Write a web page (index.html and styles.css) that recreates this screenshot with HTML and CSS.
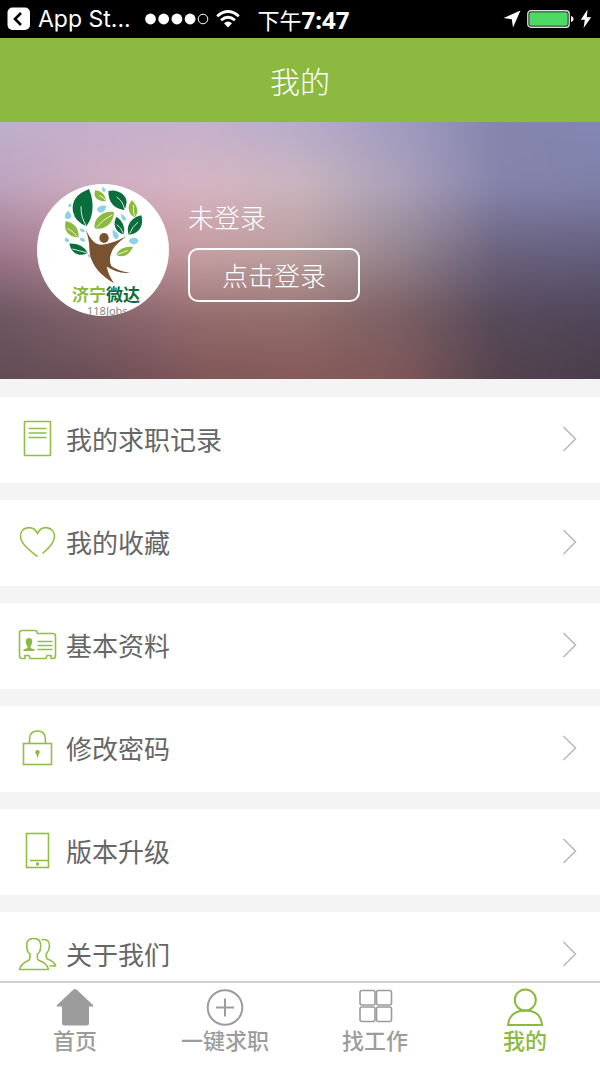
FILE: index.html
```html
<!DOCTYPE html>
<html lang="zh-CN">
<head>
<meta charset="utf-8">
<meta name="viewport" content="width=device-width, initial-scale=1">
<title>我的</title>
<link rel="stylesheet" href="styles.css">
</head>
<body>
<div class="app">
  <div class="status">
    <div class="status-left">
      <svg width="24" height="24" viewBox="0 0 24 24" aria-hidden="true"><rect x="0.5" y="0.5" width="22.5" height="22.5" rx="5" fill="#fff"/><path d="M14 6 8 12l6 6" fill="none" stroke="#000" stroke-width="2.6"/></svg>
      <span class="status-app">App St...</span>
      <svg class="signal" width="64" height="12" viewBox="0 0 64 12" aria-hidden="true"><g fill="#fff"><circle cx="5.5" cy="6" r="5.4"/><circle cx="18.7" cy="6" r="5.4"/><circle cx="31.9" cy="6" r="5.4"/><circle cx="45.1" cy="6" r="5.4"/></g><circle cx="58" cy="6" r="4.8" fill="none" stroke="#fff" stroke-width="1"/></svg>
      <svg class="wifi" width="24" height="18" viewBox="0 0 24 18" aria-hidden="true"><g fill="none" stroke="#fff" stroke-width="2.8"><path d="M1.2 6.2Q12-3.2 22.8 6.2"/><path d="M5 10.2Q12 4.2 19 10.2"/></g><path d="M8 13.2Q12 10 16 13.2L12 17.5z" fill="#fff"/></svg>
    </div>
    <span class="status-time">下午<b>7:47</b></span>
    <div class="status-right">
      <svg width="18" height="18" viewBox="0 0 18 18" aria-hidden="true"><path d="M17.5.5 10 17.5 8.8 9.2.5 8z" fill="#fff"/></svg>
      <svg width="47" height="18" viewBox="0 0 47 18" aria-hidden="true"><rect x=".8" y=".8" width="41.4" height="16.4" rx="3" fill="none" stroke="#ddd" stroke-width="1.4"/><rect x="2.3" y="2.3" width="38.4" height="13.4" rx="1.5" fill="#4cd964"/><path d="M44 6q2.6.6 2.6 3T44 12z" fill="#fff"/></svg>
      <svg width="12" height="20" viewBox="0 0 12 20" aria-hidden="true"><path d="M7.500.5.8 10.800h4L3.600 19 11.200 8.200H6.800z" fill="#fff"/></svg>
    </div>
  </div>

  <header class="title-bar"><h1>我的</h1></header>

  <section class="hero">
    <svg class="hero-bg" viewBox="-24 -24 648 305" preserveAspectRatio="none" aria-hidden="true">
      <defs>
        <linearGradient id="r1" gradientUnits="userSpaceOnUse" x1="0" x2="600" y1="0" y2="0"><stop offset="0" stop-color="#bfb0cc"/><stop offset=".17" stop-color="#c4b0cc"/><stop offset=".33" stop-color="#c4b2cb"/><stop offset=".5" stop-color="#b8accb"/><stop offset=".67" stop-color="#a09bc1"/><stop offset=".83" stop-color="#8685ae"/><stop offset="1" stop-color="#8387b2"/></linearGradient>
        <linearGradient id="r2" gradientUnits="userSpaceOnUse" x1="0" x2="600" y1="0" y2="0"><stop offset="0" stop-color="#bda3bd"/><stop offset=".17" stop-color="#d0aec2"/><stop offset=".33" stop-color="#d7b5c3"/><stop offset=".5" stop-color="#cab5be"/><stop offset=".67" stop-color="#aaa0b8"/><stop offset=".83" stop-color="#8583ab"/><stop offset="1" stop-color="#7e80a9"/></linearGradient>
        <linearGradient id="r3" gradientUnits="userSpaceOnUse" x1="0" x2="600" y1="0" y2="0"><stop offset="0" stop-color="#a0798d"/><stop offset=".17" stop-color="#bb8c9a"/><stop offset=".33" stop-color="#c69ca1"/><stop offset=".5" stop-color="#b99e9d"/><stop offset=".67" stop-color="#958590"/><stop offset=".83" stop-color="#6b6480"/><stop offset="1" stop-color="#666080"/></linearGradient>
        <linearGradient id="r4" gradientUnits="userSpaceOnUse" x1="0" x2="600" y1="0" y2="0"><stop offset="0" stop-color="#6d5661"/><stop offset=".17" stop-color="#84646d"/><stop offset=".33" stop-color="#976e6f"/><stop offset=".5" stop-color="#936f6c"/><stop offset=".67" stop-color="#7b6064"/><stop offset=".83" stop-color="#574a5b"/><stop offset="1" stop-color="#50475a"/></linearGradient>
        <linearGradient id="r5" gradientUnits="userSpaceOnUse" x1="0" x2="600" y1="0" y2="0"><stop offset="0" stop-color="#614c55"/><stop offset=".17" stop-color="#6b4e56"/><stop offset=".33" stop-color="#7f5557"/><stop offset=".5" stop-color="#865959"/><stop offset=".67" stop-color="#7d5658"/><stop offset=".83" stop-color="#54434e"/><stop offset="1" stop-color="#4a3c4a"/></linearGradient>
        <linearGradient id="fade" x2="0" y2="1"><stop offset="0" stop-color="#fff" stop-opacity="0"/><stop offset="1" stop-color="#fff"/></linearGradient>
        <mask id="m2" maskUnits="userSpaceOnUse" x="-24" y="-24" width="648" height="305"><rect x="-24" width="648" height="64" fill="url(#fade)"/><rect x="-24" y="64" width="648" height="217" fill="#fff"/></mask>
        <mask id="m3" maskUnits="userSpaceOnUse" x="-24" y="-24" width="648" height="305"><rect x="-24" y="64" width="648" height="64" fill="url(#fade)"/><rect x="-24" y="128" width="648" height="153" fill="#fff"/></mask>
        <mask id="m4" maskUnits="userSpaceOnUse" x="-24" y="-24" width="648" height="305"><rect x="-24" y="128" width="648" height="64" fill="url(#fade)"/><rect x="-24" y="192" width="648" height="89" fill="#fff"/></mask>
        <mask id="m5" maskUnits="userSpaceOnUse" x="-24" y="-24" width="648" height="305"><rect x="-24" y="192" width="648" height="65" fill="url(#fade)"/><rect x="-24" y="257" width="648" height="24" fill="#fff"/></mask>
      </defs>
      <rect x="-24" y="-24" width="648" height="305" fill="url(#r1)"/>
      <rect x="-24" y="-24" width="648" height="305" fill="url(#r2)" mask="url(#m2)"/>
      <rect x="-24" y="-24" width="648" height="305" fill="url(#r3)" mask="url(#m3)"/>
      <rect x="-24" y="-24" width="648" height="305" fill="url(#r4)" mask="url(#m4)"/>
      <rect x="-24" y="-24" width="648" height="305" fill="url(#r5)" mask="url(#m5)"/>
    </svg>
    <svg class="avatar" width="132" height="132" viewBox="0 0 132 132" role="img" aria-label="济宁微达 118Jobs">
      <g transform="translate(-7.3 -9.7) scale(.3333)">
        <g fill="#0a6e3c">
          <path d="M178 44C141 58 124 82 130 112Q137 143 170 155C190 132 196 86 178 44z"/>
          <path d="M236 50C262 43 290 60 291 83Q290 98 282 107C250 101 236 82 236 50z"/>
          <path d="M261 127C248 145 255 175 283 180Q288 145 261 127z"/>
          <path d="M335 123C307 128 287 153 297 181C325 180 344 157 335 123z"/>
          <path d="M119 208C125 237 149 249 174 236Q159 207 119 208z"/>
        </g>
        <g fill="#8cba3f">
          <path d="M197 47C188 68 204 82 229 81Q229 54 197 47z"/>
          <path d="M307 78C289 96 297 122 315 129Q335 108 307 78z"/>
          <path d="M253 113C217 109 190 134 195 162C226 168 251 148 253 113z"/>
          <path d="M108 140C100 168 117 190 147 189Q149 150 108 140z"/>
          <path d="M310 218C285 214 263 226 260 243Q293 255 310 218z"/>
        </g>
        <g fill="#8dd3e5">
          <path d="M230 94q-22-3-28 10 0 11 14 11 12-4 14-21z"/><path d="M115 109q-14 13-8 23 14 7 19-7-1-8-11-16z"/><path d="M123 86q-12 9-5 13 12-1 5-13z"/><path d="M217 38q-3 14 7 15 11-8-7-15z"/><path d="M275 118q-3 18 10 21 13-5-10-21z"/><path d="M297 202q2-12 18-12 14 3 10 13-11 15-28-1z"/><path d="M249 166q-2 23 9 28 10 0 9-11-4-10-18-17z"/><path d="M150 163q4 14 15 10 1-11-15-10z"/><path d="M107 189q-6 13 6 15 15-5-6-15z"/><path d="M150 191q3 15 16 10 1-12-16-10z"/><path d="M174 240q1 11 9 10 6-9-9-10z"/>
        </g>
        <g fill="none" stroke="#fff" stroke-width="2.5"><path d="M154 96Q153 129 169 153M261 68q19 14 23 35M209 64q13 4 19 15M312 92q-3 18 2 33M247 122q-28 14-46 36M261 151q14 8 20 27M325 144q-19 14-25 34M113 162q18 9 29 24M128 224q19 5 43 11M294 229q-14 5-31 12"/></g>
        <g fill="#795230"><ellipse cx="223" cy="191" rx="14" ry="15"/><path d="M168 166C184 197 196 211 215 211Q243 211 290 186Q249 216 244 238Q237 258 245 275Q265 291 301 295Q265 300 231 277Q236 303 253 327C207 300 180 267 179 222Q179 196 168 166z"/></g>
      </g>
      <text class="logo-name" x="35" y="117"><tspan fill="#8cba3f">济宁</tspan><tspan fill="#0a6e3c">微达</tspan></text>
      <text class="logo-sub" x="50" y="131">118Jobs</text>
    </svg>
    <div class="account">
      <p>未登录</p>
      <button class="login" type="button">点击登录</button>
    </div>
  </section>

  <main class="menu">
    <a class="row" href="#records"><svg class="icon" viewBox="0 0 40 40"><rect x="6.500" y="2.500" width="26" height="34" rx=".5"/><path d="M10.500 9.500h18M10.500 14h18M10.500 18.500h18"/></svg><span>我的求职记录</span><svg class="chevron" viewBox="0 0 16 28"><path d="m1.500 2 12 12-12 12"/></svg></a>
    <a class="row" href="#favorites"><svg class="icon" viewBox="0 0 40 40"><path d="M19.500 34.700C14 29.700 3 23 2.500 14.500C2 5 14.500 2 19.500 11.500C24 2 36.500 5 36.500 14.500C36.500 21 30 27 24.500 31.500"/></svg><span>我的收藏</span><svg class="chevron" viewBox="0 0 16 28"><path d="m1.500 2 12 12-12 12"/></svg></a>
    <a class="row" href="#profile"><svg class="icon" viewBox="0 0 40 40"><path d="M7 33.500H4q-2.500 0-2.500-2.500V8q0-2.500 2.500-2.500h13q2 0 2.500 3H35q2.500 0 2.500 2.500v20q0 2.500-2.500 2.500h-2v-3h-4l-1 3H12l-1-3H7z"/><path d="M19.500 16.500h15M19.500 20.500h15M19.500 24.500h15"/><path class="solid" d="M11 13q3.500 0 3.200 4-.4 3-1.600 4v2l4 1.500v1.500H5.500v-1.500l4-1.500v-2q-1.500-1-1.700-4-.3-4 3.200-4z"/></svg><span>基本资料</span><svg class="chevron" viewBox="0 0 16 28"><path d="m1.500 2 12 12-12 12"/></svg></a>
    <a class="row" href="#password"><svg class="icon" viewBox="0 0 40 40"><rect x="5.500" y="15.500" width="28" height="21"/><path d="M11.500 15.500v-4q0-8.500 8-8.500t8 8.500v4"/><path class="solid" d="M19.500 22c3 0 2.500 3.500 1 4.500l-.5 3h-1l-.5-3c-1.500-1-2-4.500 1-4.500z"/></svg><span>修改密码</span><svg class="chevron" viewBox="0 0 16 28"><path d="m1.500 2 12 12-12 12"/></svg></a>
    <a class="row" href="#upgrade"><svg class="icon" viewBox="0 0 40 40"><rect x="8.500" y="2.500" width="22" height="34"/><path d="M12 29.500h18"/><circle class="solid" cx="19.500" cy="33" r="1.700"/></svg><span>版本升级</span><svg class="chevron" viewBox="0 0 16 28"><path d="m1.500 2 12 12-12 12"/></svg></a>
    <a class="row" href="#about"><svg class="icon" viewBox="0 0 40 40"><path d="M15.500 4.500C9 4.500 8 9 9 14.500q.5 4 3 5.500.5 5-1.500 6.500Q3 29.500 1.500 35.500h29Q29 29 21 26.500q-2.500-1.500-1.500-6.500 2.500-1.500 3-5.500C23.500 9 22 4.500 15.500 4.500z"/><path d="M23.500 5.700q8-1.200 8 6.300 0 4-3 7.500-1 4 1 5.500 7 2.500 8 7h-6"/></svg><span>关于我们</span><svg class="chevron" viewBox="0 0 16 28"><path d="m1.500 2 12 12-12 12"/></svg></a>
  </main>

  <nav class="tabs">
    <a class="tab" href="#home"><svg viewBox="0 0 40 40"><path class="solid" d="M20 2q1 0 2 1l16 15q1 1.500-.5 1.500H34V36q0 2.500-2.500 2.500h-22Q7 38.500 7 36V19.500H2.500Q1 19.500 2 18L18 3q1-1 2-1z"/></svg><span>首页</span></a>
    <a class="tab" href="#apply"><svg viewBox="0 0 40 40"><circle cx="20" cy="20.500" r="17.300"/><path d="M20 11.500v18M11 20.500h18"/></svg><span>一键求职</span></a>
    <a class="tab" href="#jobs"><svg class="thin" viewBox="0 0 40 40"><rect x="5" y="3.500" width="15" height="14.500" rx="2"/><rect x="21.500" y="3.500" width="15" height="14.500" rx="2"/><rect x="5" y="20" width="15" height="14.500" rx="2"/><rect x="21.500" y="20" width="15" height="14.500" rx="2"/></svg><span>找工作</span></a>
    <a class="tab active" href="#me" aria-current="page"><svg viewBox="0 0 40 40"><circle cx="20.300" cy="13" r="10.500"/><path d="M3 38q1.500-14.500 17.300-14.500T37 38z"/></svg><span>我的</span></a>
  </nav>
</div>
</body>
</html>
```
FILE: styles.css
```css
* { box-sizing: border-box; }
body {
  margin: 0;
  background: #fff;
  color: #666;
  font-family: "Noto Sans CJK SC", sans-serif;
}
a { color: inherit; text-decoration: none; }
svg { display: block; flex: none; }
h1, p { margin: 0; font-weight: 300; }

.app { display: flex; flex-direction: column; height: 100vh; }

.status {
  display: grid;
  grid-template-columns: 1fr auto 1fr;
  align-items: center;
  flex: none;
  height: 38px;
  padding: 0 8px 0 7px;
  background: #000;
  color: #fff;
  font-size: 22px;
  line-height: 38px;
}
.status-left, .status-right { display: flex; align-items: center; }
.status-left { gap: 7px; }
.status-right { justify-content: flex-end; gap: 6px; }
.status-app { font-family: Inter, sans-serif; font-size: 23px; white-space: nowrap; }
.signal { margin-left: 7px; }
.status-time { padding-left: 8px; }
.status-time b { font-family: "Noto Sans", sans-serif; font-size: 24px; font-weight: 700; line-height: 24px; }

.title-bar {
  flex: none;
  background: #8cb93f;
  color: #fff;
  text-align: center;
}
.title-bar h1 { font-size: 30px; line-height: 84px; }

.hero {
  position: relative;
  display: flex;
  flex: none;
  align-items: center;
  gap: 19px;
  padding: 62px 37px 63px;
  overflow: hidden;
}
.hero-bg {
  position: absolute;
  top: -24px;
  left: -24px;
  width: calc(100% + 48px);
  height: calc(100% + 48px);
  filter: blur(9px);
}
.avatar { position: relative; border-radius: 50%; background: #fff; }
.logo-name { font-size: 17px; font-weight: 700; }
.logo-sub { font-family: "Noto Sans", sans-serif; font-size: 11px; fill: #888; }
.account { position: relative; color: #fff; font-size: 26px; font-weight: 300; line-height: 36px; }
.login {
  display: block;
  margin-top: 13px;
  padding: 7px 32px;
  border: 2px solid #fff;
  border-radius: 10px;
  background: rgba(255, 255, 255, .06);
  color: inherit;
  font: inherit;
}

.menu {
  display: flex;
  flex: 1;
  flex-direction: column;
  gap: 17px;
  min-height: 0;
  padding-top: 18px;
  overflow-y: auto;
  scrollbar-width: none;
  background: #f4f4f4;
}
.row {
  display: flex;
  flex: none;
  align-items: center;
  gap: 8px;
  height: 86px;
  padding: 0 22px 3px 18px;
  background: #fff;
  font-size: 26px;
}
.row span { flex: 1; }
.icon { width: 40px; height: 40px; color: #8cb93f; fill: none; stroke: #8fbf45; stroke-width: 1.6; }
.icon .solid, .tab .solid { fill: currentColor; stroke: none; }
.chevron { width: 16px; height: 28px; fill: none; stroke: #bbb; stroke-width: 1.6; }

.tabs {
  display: grid;
  grid-template-columns: repeat(4, 1fr);
  flex: none;
  height: 84px;
  padding-top: 4px;
  border-top: 2px solid #d2d2d2;
  background: #fff;
}
.tab {
  display: flex;
  flex-direction: column;
  align-items: center;
  color: #9c9c9c;
  font-size: 22px;
  font-weight: 500;
  line-height: 24px;
}
.tab svg { width: 40px; height: 40px; fill: none; stroke: currentColor; stroke-width: 2; }
.tab .thin { stroke-width: 1.6; }
.tab.active { color: #8cb93f; }
```
